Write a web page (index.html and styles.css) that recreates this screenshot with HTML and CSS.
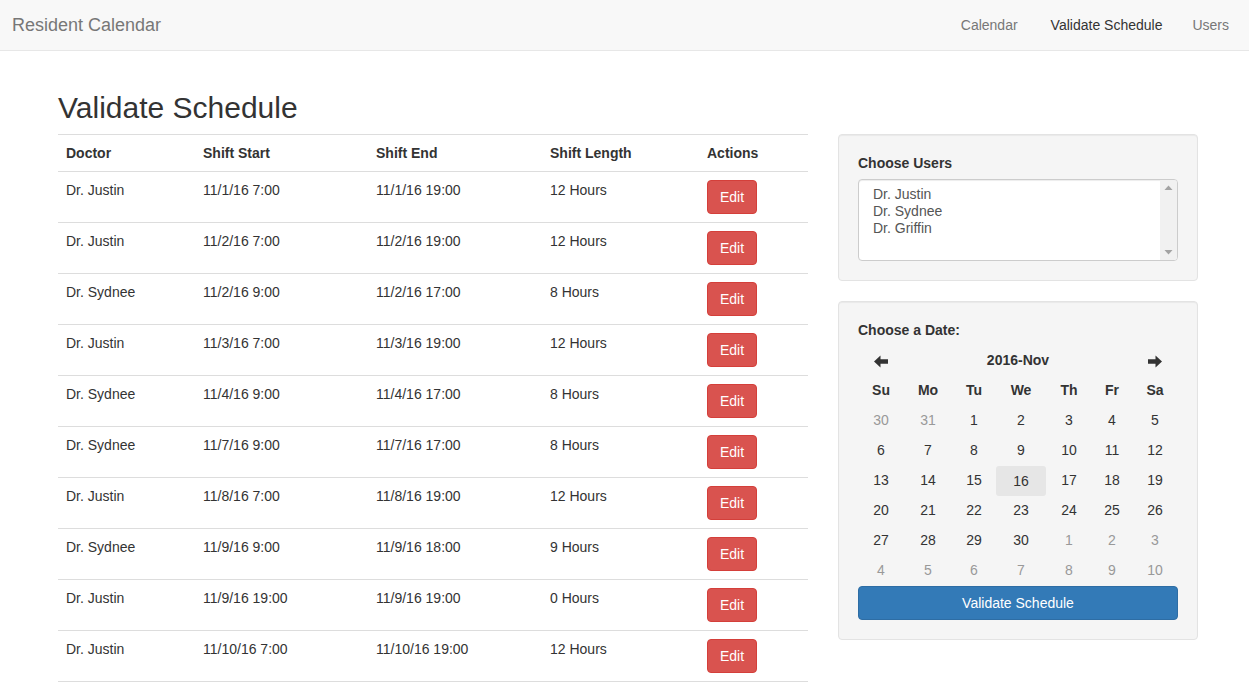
FILE: index.html
```html
<!DOCTYPE html>
<html>
<head>
<meta charset="utf-8">
<title>Resident Calendar</title>
<link rel="stylesheet" href="styles.css">
</head>
<body>
<nav class="navbar">
  <a class="brand" href="#">Resident Calendar</a>
  <ul class="nav">
    <li><a href="#">Calendar</a></li>
    <li class="active"><a href="#">Validate Schedule</a></li>
    <li><a href="#">Users</a></li>
  </ul>
</nav>

<div class="container">
  <h2 class="title">Validate Schedule</h2>
  <div class="row">
    <div class="main">
      <table class="table">
        <colgroup>
          <col class="c-doc"><col class="c-start"><col class="c-end"><col class="c-len"><col class="c-act">
        </colgroup>
        <thead>
          <tr><th>Doctor</th><th>Shift Start</th><th>Shift End</th><th>Shift Length</th><th>Actions</th></tr>
        </thead>
        <tbody>
          <tr><td>Dr. Justin</td><td>11/1/16 7:00</td><td>11/1/16 19:00</td><td>12 Hours</td><td><button class="btn btn-danger">Edit</button></td></tr>
          <tr><td>Dr. Justin</td><td>11/2/16 7:00</td><td>11/2/16 19:00</td><td>12 Hours</td><td><button class="btn btn-danger">Edit</button></td></tr>
          <tr><td>Dr. Sydnee</td><td>11/2/16 9:00</td><td>11/2/16 17:00</td><td>8 Hours</td><td><button class="btn btn-danger">Edit</button></td></tr>
          <tr><td>Dr. Justin</td><td>11/3/16 7:00</td><td>11/3/16 19:00</td><td>12 Hours</td><td><button class="btn btn-danger">Edit</button></td></tr>
          <tr><td>Dr. Sydnee</td><td>11/4/16 9:00</td><td>11/4/16 17:00</td><td>8 Hours</td><td><button class="btn btn-danger">Edit</button></td></tr>
          <tr><td>Dr. Sydnee</td><td>11/7/16 9:00</td><td>11/7/16 17:00</td><td>8 Hours</td><td><button class="btn btn-danger">Edit</button></td></tr>
          <tr><td>Dr. Justin</td><td>11/8/16 7:00</td><td>11/8/16 19:00</td><td>12 Hours</td><td><button class="btn btn-danger">Edit</button></td></tr>
          <tr><td>Dr. Sydnee</td><td>11/9/16 9:00</td><td>11/9/16 18:00</td><td>9 Hours</td><td><button class="btn btn-danger">Edit</button></td></tr>
          <tr><td>Dr. Justin</td><td>11/9/16 19:00</td><td>11/9/16 19:00</td><td>0 Hours</td><td><button class="btn btn-danger">Edit</button></td></tr>
          <tr><td>Dr. Justin</td><td>11/10/16 7:00</td><td>11/10/16 19:00</td><td>12 Hours</td><td><button class="btn btn-danger">Edit</button></td></tr>
        </tbody>
      </table>
    </div>

    <div class="side">
      <div class="well">
        <label class="label">Choose Users</label>
        <div class="select">
          <div class="options">
            <div class="opt">Dr. Justin</div>
            <div class="opt">Dr. Sydnee</div>
            <div class="opt">Dr. Griffin</div>
          </div>
          <div class="scrollbar">
            <svg class="sb-arrow" width="9" height="6" viewBox="0 0 9 6"><polygon points="4.5,0.5 8.5,5 0.5,5" fill="#a3a3a3"/></svg>
            <svg class="sb-arrow" width="9" height="6" viewBox="0 0 9 6"><polygon points="0.5,1 8.5,1 4.5,5.5" fill="#a3a3a3"/></svg>
          </div>
        </div>
      </div>

      <div class="well">
        <label class="label">Choose a Date:</label>
        <table class="cal">
          <colgroup>
            <col class="w46"><col class="w48"><col class="w44"><col class="w50"><col class="w46"><col class="w40"><col class="w46">
          </colgroup>
          <thead>
            <tr class="cal-head">
              <th><svg width="14" height="13" viewBox="0 0 14 13"><path d="M0 6.5 L6.5 0.5 L6.5 4.3 L14 4.3 L14 8.7 L6.5 8.7 L6.5 12.5 Z" fill="#333"/></svg></th>
              <th colspan="5">2016-Nov</th>
              <th><svg width="14" height="13" viewBox="0 0 14 13"><path d="M14 6.5 L7.5 0.5 L7.5 4.3 L0 4.3 L0 8.7 L7.5 8.7 L7.5 12.5 Z" fill="#333"/></svg></th>
            </tr>
            <tr class="cal-days">
              <th>Su</th><th>Mo</th><th>Tu</th><th>We</th><th>Th</th><th>Fr</th><th>Sa</th>
            </tr>
          </thead>
          <tbody>
            <tr><td class="muted">30</td><td class="muted">31</td><td>1</td><td>2</td><td>3</td><td>4</td><td>5</td></tr>
            <tr><td>6</td><td>7</td><td>8</td><td>9</td><td>10</td><td>11</td><td>12</td></tr>
            <tr><td>13</td><td>14</td><td>15</td><td><span class="day active">16</span></td><td>17</td><td>18</td><td>19</td></tr>
            <tr><td>20</td><td>21</td><td>22</td><td>23</td><td>24</td><td>25</td><td>26</td></tr>
            <tr><td>27</td><td>28</td><td>29</td><td>30</td><td class="muted">1</td><td class="muted">2</td><td class="muted">3</td></tr>
            <tr><td class="muted">4</td><td class="muted">5</td><td class="muted">6</td><td class="muted">7</td><td class="muted">8</td><td class="muted">9</td><td class="muted">10</td></tr>
          </tbody>
        </table>
        <button class="btn btn-primary btn-block">Validate Schedule</button>
      </div>
    </div>
  </div>
</div>
</body>
</html>
```

FILE: styles.css
```css
* { box-sizing: border-box; }
html, body { margin: 0; padding: 0; }
body {
  font-family: "Liberation Sans", Arial, Helvetica, sans-serif;
  font-size: 14px;
  line-height: 1.42857;
  color: #333;
  background: #fff;
}
a { text-decoration: none; }

.navbar {
  height: 51px;
  background: #f8f8f8;
  border-bottom: 1px solid #e7e7e7;
  display: flex;
  align-items: center;
  justify-content: space-between;
  padding: 0 5px 0 12px;
}
.brand {
  font-size: 18px;
  line-height: 20px;
  color: #777;
}
.nav {
  list-style: none;
  margin: 0;
  padding: 0;
  display: flex;
}
.nav a {
  display: block;
  padding: 15px;
  line-height: 20px;
  color: #777;
}
.nav li:first-child a { padding-left: 17px; padding-right: 18px; }
.nav .active a { color: #333; }

.container {
  width: 1140px;
  margin-left: 58px;
  padding-top: 20px;
}
.title {
  font-size: 30px;
  font-weight: 500;
  line-height: 1.1;
  margin: 20px 0 10px;
  color: #333;
}
.row {
  display: flex;
  gap: 30px;
  align-items: flex-start;
}
.main { width: 750px; }
.side { width: 360px; }

.table {
  width: 100%;
  border-collapse: collapse;
  table-layout: fixed;
}
.c-doc { width: 137px; }
.c-start { width: 173px; }
.c-end { width: 174px; }
.c-len { width: 157px; }
.c-act { width: 109px; }
.table th, .table td {
  padding: 8px;
  text-align: left;
  vertical-align: top;
  border-top: 1px solid #ddd;
  line-height: 20px;
}
.table th {
  font-weight: bold;
  border-bottom: 1px solid #ddd;
}
.table tbody tr:last-child td { border-bottom: 1px solid #ddd; }

.btn {
  display: inline-block;
  font-family: inherit;
  font-size: 14px;
  line-height: 20px;
  padding: 6px 12px;
  border: 1px solid transparent;
  border-radius: 4px;
  cursor: pointer;
}
.btn-danger {
  color: #fff;
  background: #d9534f;
  border-color: #d43f3a;
}
.btn-primary {
  color: #fff;
  background: #337ab7;
  border-color: #2e6da4;
}
.btn-block {
  display: block;
  width: 100%;
}

.well {
  background: #f5f5f5;
  border: 1px solid #e3e3e3;
  border-radius: 4px;
  padding: 19px;
  margin-bottom: 20px;
  box-shadow: inset 0 1px 1px rgba(0,0,0,.05);
}
.label {
  display: block;
  font-weight: bold;
  margin-bottom: 5px;
}
.select {
  height: 82px;
  background: #fff;
  border: 1px solid #ccc;
  border-radius: 4px;
  display: flex;
  overflow: hidden;
  box-shadow: inset 0 1px 1px rgba(0,0,0,.075);
}
.options {
  flex: 1;
  padding: 6px 12px;
  color: #555;
}
.opt {
  padding: 0 2px;
  line-height: 17px;
}
.scrollbar {
  width: 17px;
  background: #f1f1f1;
  display: flex;
  flex-direction: column;
  justify-content: space-between;
  align-items: center;
  padding: 5px 0;
}
.sb-arrow { display: block; }

.cal {
  width: 320px;
  border-collapse: collapse;
  table-layout: fixed;
  margin: 1px 0 0;
}
.w46 { width: 46px; }
.w48 { width: 48px; }
.w44 { width: 44px; }
.w50 { width: 50px; }
.w40 { width: 40px; }
.cal th, .cal td {
  padding: 0;
  height: 30px;
  text-align: center;
  vertical-align: middle;
}
.cal th { font-weight: bold; }
.cal-head th svg { display: inline-block; vertical-align: middle; }
.cal td { color: #333; }
.cal td.muted { color: #999; }
.day {
  display: block;
  height: 30px;
  line-height: 30px;
}
.day.active {
  background: #e6e6e6;
  border-radius: 3px;
}
```
